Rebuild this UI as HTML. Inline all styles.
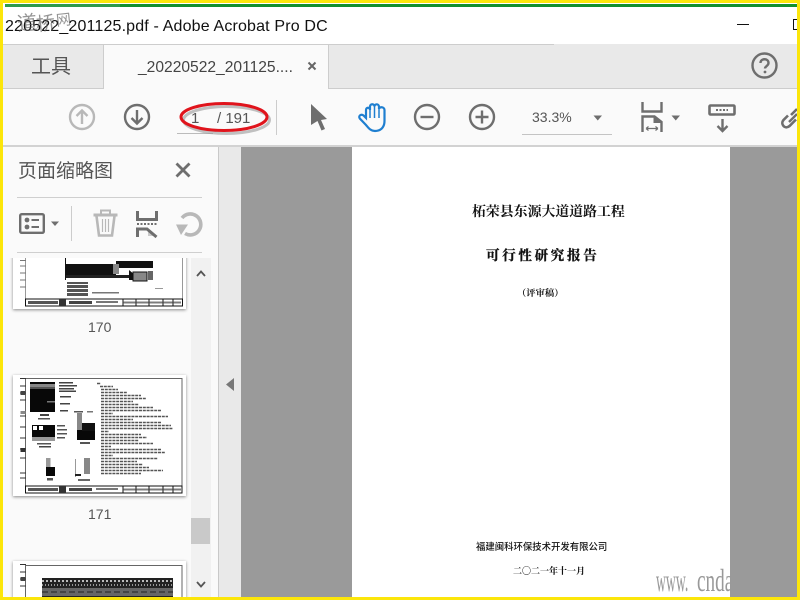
<!DOCTYPE html>
<html><head><meta charset="utf-8"><style>
html,body{margin:0;padding:0;width:800px;height:600px;overflow:hidden;background:#fff}
body{position:relative;font-family:"Liberation Sans","Noto Sans CJK SC",sans-serif}
.a{position:absolute}
.t{position:absolute;white-space:nowrap;line-height:1}
svg{position:absolute;overflow:visible}
.ic{fill:none;stroke:#6e6e6e;stroke-width:2.4}
.serif{font-family:"Liberation Serif","Noto Serif CJK SC",serif;color:#111}
</style></head><body>
<!-- title -->
<div class="a" style="left:5px;top:4px;width:795px;height:3px;background:#11902f"></div>
<div class="a" style="left:5px;top:4px;width:115px;height:3px;background:#2f9a4c"></div>
<div class="t" style="left:5px;top:19px;font-size:16px;color:#111;letter-spacing:.16px;width:330px;direction:rtl;text-align:left;overflow:hidden;height:19px"><span style="direction:ltr;unicode-bidi:bidi-override">220522_201125.pdf - Adobe Acrobat Pro DC</span></div>
<div class="a" style="left:737px;top:24px;width:12px;height:1px;background:#111"></div>
<div class="a" style="left:793px;top:19px;width:5px;height:11px;border:1px solid #111;box-sizing:border-box"></div>
<div class="t" style="left:17px;top:12px;font-size:20px;color:rgba(90,90,90,.65);transform:rotate(-6deg);font-family:'Noto Sans CJK SC',sans-serif">道</div>
<div class="t" style="left:36px;top:13px;font-size:19px;color:rgba(90,90,90,.65);transform:rotate(-6deg);font-family:'Noto Sans CJK SC',sans-serif">桥</div>
<div class="t" style="left:56px;top:12px;font-size:15px;color:rgba(90,90,90,.65);transform:rotate(-6deg);font-family:'Noto Sans CJK SC',sans-serif">网</div>
<!-- tabs -->
<div class="a" style="left:0;top:44px;width:800px;height:45px;background:#e9e9e9;border-bottom:1px solid #cdcdcd;box-sizing:border-box"></div>
<div class="a" style="left:0;top:44px;width:554px;height:1px;background:#cdcdcd"></div>
<div class="a" style="left:103px;top:44px;width:226px;height:45px;background:#fafafa;border:1px solid #cdcdcd;border-bottom:0;box-sizing:border-box"></div>
<div class="t" style="left:31px;top:57px;font-size:20px;color:#555">工具</div>
<div class="t" style="left:138px;top:60px;font-size:15.6px;color:#444">_20220522_201125....</div>
<svg style="left:308px;top:62px" width="8" height="8"><path d="M0.500 0.500L7.500 7.500M7.500 0.500L0.500 7.500" stroke="#666" stroke-width="2"/></svg>
<svg style="left:751px;top:52px" width="28" height="28"><circle cx="13.500" cy="13.500" r="12" class="ic"/><path d="M9.500 11c0-5 8-5 8 0 0 3-3.500 3-3.500 5.500" class="ic" stroke-width="2"/><circle cx="14" cy="20" r="1.400" fill="#6e6e6e"/></svg>
<!-- toolbar -->
<div class="a" style="left:0;top:89px;width:800px;height:58px;background:#fafafa;border-bottom:2px solid #d2d2d2;box-sizing:border-box"></div>
<svg style="left:68px;top:103px" width="28" height="28"><circle cx="14" cy="14" r="12" fill="none" stroke="#b8b8b8" stroke-width="2.400"/><path d="M14 21V8M8.500 13L14 7.500L19.500 13" fill="none" stroke="#b8b8b8" stroke-width="2.400"/></svg>
<svg style="left:123px;top:103px" width="28" height="28"><circle cx="14" cy="14" r="12" class="ic"/><path d="M14 7V20M8.500 15L14 20.500L19.500 15" class="ic"/></svg>
<div class="a" style="left:177px;top:133px;width:36px;height:1px;background:#bbb"></div>
<div class="t" style="left:191px;top:111px;font-size:15px;color:#555">1</div>
<div class="t" style="left:217px;top:111px;font-size:15px;color:#555">/ 191</div>
<div class="a" style="left:276px;top:100px;width:1px;height:35px;background:#ccc"></div>
<svg style="left:178px;top:98px" width="96" height="40"><ellipse cx="47" cy="20" rx="43" ry="13.500" fill="none" stroke="#999" stroke-width="3" transform="translate(1.500 2)" opacity=".6"/><ellipse cx="46" cy="19" rx="43" ry="13.500" fill="none" stroke="#e0141c" stroke-width="3"/></svg>
<svg style="left:309px;top:103px" width="20" height="28"><path d="M2 1L18 16L12 17L16 26L12.500 27.500L8.500 18L2 22Z" fill="#6e6e6e"/></svg>
<svg style="left:358px;top:103px" width="30" height="30"><path d="M8 22L1.800 15.500C0 13 3 10.500 5.500 12.500L8 15V7C8 4 12 4 12 7V3.500C12 .5 16.500 .5 16.500 3.500C16.500 .5 21 .5 21 4V6C21 3.500 26.500 3.500 26.500 7V18C26.500 24 23 28 17 28C12.500 28 10.500 25 8 22Z" fill="none" stroke="#1f7fd0" stroke-width="2.200"/><path d="M12 6V15M16.500 3.500V15M21 5V15" fill="none" stroke="#1f7fd0" stroke-width="1.500"/></svg>
<svg style="left:413px;top:103px" width="28" height="28"><circle cx="14" cy="14" r="12" class="ic"/><path d="M7.500 14H20.500" class="ic"/></svg>
<svg style="left:468px;top:103px" width="28" height="28"><circle cx="14" cy="14" r="12" class="ic"/><path d="M7.500 14H20.500M14 7.500V20.500" class="ic"/></svg>
<div class="t" style="left:532px;top:110px;font-size:14px;color:#555">33.3%</div>
<svg style="left:593px;top:115px" width="10" height="6"><path d="M0.500 0.500H9L4.750 5.500Z" fill="#6e6e6e"/></svg>
<div class="a" style="left:522px;top:133.500px;width:90px;height:1px;background:#c4c4c4"></div>
<svg style="left:640px;top:102px" width="24" height="32"><path d="M2.500 0V9.500H21.500V0" class="ic" stroke-width="2.800"/><path d="M2.500 30V14.500H14.500L21.500 20V30" class="ic" stroke-width="2.800"/><path d="M14 15V20.500H21" fill="#6e6e6e" stroke="#6e6e6e"/><path d="M6 26.500H18M6 26.500L8.500 24.500M6 26.500L8.500 28.500M18 26.500L15.500 24.500M18 26.500L15.500 28.500" stroke="#6e6e6e" stroke-width="1.200" fill="none"/></svg>
<svg style="left:671px;top:115px" width="10" height="6"><path d="M0.500 0.500H9L4.750 5.500Z" fill="#6e6e6e"/></svg>
<svg style="left:708px;top:104px" width="30" height="29"><rect x="1.500" y="1.500" width="25" height="9" rx="1" fill="none" stroke="#6e6e6e" stroke-width="2.600"/><path d="M8 6H20" stroke="#6e6e6e" stroke-width="2" stroke-dasharray="2 1.500"/><path d="M14.500 15V27M9.500 22L14.500 27L19.500 22" class="ic" stroke-width="2.800"/></svg>
<svg style="left:781px;top:106px" width="17" height="24"><path d="M16 3L10 9M7 9.500L2.500 14C-1 18 4 24 8.500 20L15 13.500" fill="none" stroke="#6e6e6e" stroke-width="2.600"/><path d="M8 16L16 8" fill="none" stroke="#6e6e6e" stroke-width="2.400"/></svg>
<!-- side panel -->
<div class="a" style="left:0;top:147px;width:219px;height:453px;background:#fafafa;border-right:1px solid #c9c9c9;box-sizing:border-box"></div>
<div class="a" style="left:219px;top:147px;width:22px;height:453px;background:#e9e9e9"></div>
<div class="t" style="left:18px;top:162px;font-size:19px;color:#555">页面缩略图</div>
<svg style="left:175px;top:162px" width="16" height="16"><path d="M1.500 1.500L14.500 14.500M14.500 1.500L1.500 14.500" stroke="#6e6e6e" stroke-width="2.800"/></svg>
<div class="a" style="left:17px;top:197px;width:185px;height:1px;background:#cfcfcf"></div>
<div class="a" style="left:17px;top:252px;width:185px;height:1px;background:#cfcfcf"></div>
<div class="a" style="left:71px;top:206px;width:1px;height:35px;background:#ccc"></div>
<svg style="left:19px;top:213px" width="27" height="22"><rect x="1.200" y="1.200" width="23.600" height="18.600" rx="1.500" fill="none" stroke="#6e6e6e" stroke-width="2.400"/><circle cx="8" cy="7" r="2.400" fill="#6e6e6e"/><circle cx="8" cy="14" r="2.400" fill="#6e6e6e"/><path d="M12.500 7H20M12.500 14H20" stroke="#6e6e6e" stroke-width="2"/></svg>
<svg style="left:51px;top:221px" width="9" height="6"><path d="M0 0.500H8L4 5Z" fill="#6e6e6e"/></svg>
<svg style="left:93px;top:209px" width="26" height="28"><path d="M0.500 6H24.500" stroke="#b8b8b8" stroke-width="3" fill="none"/><path d="M8 5V1.500H17V5" stroke="#b8b8b8" stroke-width="2" fill="none"/><path d="M3.500 7L6 26.500H19L21.500 7" fill="none" stroke="#b8b8b8" stroke-width="2.600"/><path d="M9.500 10V23M12.500 10V23M15.500 10V23" fill="none" stroke="#b8b8b8" stroke-width="1.200"/></svg>
<svg style="left:135px;top:210px" width="24" height="28"><path d="M2.500 1V9.500H21.500V1" fill="none" stroke="#6e6e6e" stroke-width="3"/><path d="M2 14H22" stroke="#6e6e6e" stroke-width="2" stroke-dasharray="2 1.500"/><path d="M2.500 27V19H12L21.500 27" fill="none" stroke="#6e6e6e" stroke-width="3"/><path d="M13 20L13 26H21Z" fill="#6e6e6e" opacity=".35"/></svg>
<svg style="left:175px;top:210px" width="28" height="28"><path d="M10 23.500A10.500 10.500 0 1 0 7 8" fill="none" stroke="#b8b8b8" stroke-width="3.600"/><path d="M1 14.500H13L6 25Z" fill="#b8b8b8"/></svg>
<!-- thumbs area -->
<div class="a" style="left:3px;top:258px;width:208px;height:342px;overflow:hidden">
 <div class="a" style="left:188px;top:0;width:20px;height:342px;background:#f1f1f1"></div>
 <div class="a" style="left:188px;top:260px;width:19px;height:26px;background:#c9c9c9"></div>
 <svg style="left:193px;top:12px" width="10" height="7"><path d="M1 6L5 1.500L9 6" fill="none" stroke="#555" stroke-width="1.800"/></svg>
 <svg style="left:193px;top:323px" width="10" height="7"><path d="M1 1L5 5.500L9 1" fill="none" stroke="#555" stroke-width="1.800"/></svg>
 <!-- 170 -->
 <div class="a" style="left:10px;top:-20px;width:173px;height:71px;background:#fff;box-shadow:0 1px 3px rgba(0,0,0,.45)"></div>
 <svg style="left:10px;top:0" width="173" height="50">
  <path d="M12.500 0V48M169.500 0V48" fill="none" stroke="#999"/>
  <path d="M7 2.500H13M7 8H13M7 15H13M7 22H13M7 29H13" stroke="#777" fill="none"/>
  <path d="M52.500 0V22" stroke="#111"/>
  <rect x="53" y="6" width="50" height="13" fill="#111"/><rect x="103" y="3" width="37" height="7" fill="#111"/><rect x="100" y="6" width="6" height="10" fill="#888"/><rect x="53" y="17" width="63" height="3" fill="#222"/><path d="M116 12L128 22H116Z" fill="#111"/><rect x="120" y="14" width="14" height="9" fill="#888"/>
  <path d="M120 14H134V23H120Z" fill="none" stroke="#111"/><rect x="135" y="13" width="5" height="9" fill="#666"/>
  <rect x="54" y="24" width="21" height="14" fill="#555"/><rect x="54" y="26" width="21" height="1" fill="#fff"/><rect x="54" y="30" width="21" height="1" fill="#fff"/><rect x="54" y="34" width="21" height="1" fill="#fff"/>
  <rect x="79" y="34" width="27" height="1.500" fill="#777"/><rect x="142" y="30" width="8" height="1" fill="#999"/>
  <rect x="12.500" y="41" width="157" height="7" fill="#fff" stroke="#111"/><rect x="15" y="43" width="30" height="3" fill="#555"/><rect x="46" y="41" width="7" height="7" fill="#333"/><rect x="56" y="43" width="23" height="3" fill="#444"/><rect x="83" y="43" width="22" height="2" fill="#777"/><path d="M110 41V48M123 41V48M136 41V48M150 41V48M160 41V48" stroke="#111"/><rect x="110" y="43.500" width="58" height="2" fill="#444" opacity=".7"/>
 </svg>
 <div class="t" style="left:85px;top:62px;font-size:14px;color:#555">170</div>
 <!-- 171 -->
 <div class="a" style="left:10px;top:117px;width:173px;height:121px;background:#fff;box-shadow:0 1px 3px rgba(0,0,0,.45)"></div>
 <svg style="left:10px;top:117px" width="173" height="121">
  <rect x="12.500" y="3.500" width="156.500" height="114.500" fill="none" stroke="#666"/>
  <path d="M7 3.500H13M7 11H13M7 18H13M7 25H13M7 41H13M7 52H13M7 63H13M7 74H13M7 83H13M7 98H13M7 103H13" stroke="#333" fill="none"/><rect x="7.500" y="16" width="5" height="4" fill="#444"/><rect x="7.500" y="36" width="5" height="3" fill="#888"/><rect x="7.500" y="73" width="5" height="4" fill="#333"/>
  <rect x="17" y="7" width="25" height="30" fill="#080808"/><rect x="17" y="9" width="25" height="3" fill="#888"/><rect x="17" y="12" width="25" height="2" fill="#555"/><rect x="34" y="26" width="8" height="1.500" fill="#777"/>
  <g fill="#444"><rect x="46" y="7" width="14" height="1.500"/><rect x="46" y="10" width="18" height="1.500"/><rect x="46" y="13" width="15" height="1.500"/><rect x="46" y="15.500" width="17" height="1.500"/><rect x="47" y="21" width="11" height="1.500"/><rect x="47" y="28" width="10" height="1.500"/><rect x="47" y="35" width="8" height="1.500"/></g>
  <rect x="27" y="39" width="9" height="2" fill="#444"/><rect x="25" y="43" width="12" height="1.500" fill="#555"/>
  <rect x="19" y="50" width="23" height="16" fill="#080808"/><rect x="19" y="62" width="23" height="4" fill="#999"/><rect x="20" y="51" width="4" height="4" fill="#fff"/><rect x="26" y="51" width="4" height="4" fill="#fff"/><g fill="#555"><rect x="44" y="50" width="8" height="1.500"/><rect x="44" y="54" width="10" height="1.500"/><rect x="44" y="58" width="10" height="1.500"/><rect x="44" y="62" width="8" height="1.500"/></g><rect x="24" y="68" width="14" height="1.500" fill="#555"/><rect x="26" y="71" width="12" height="1.500" fill="#444"/>
  <rect x="64" y="38" width="5" height="21" fill="#888"/><rect x="64" y="55" width="18" height="10" fill="#080808"/><rect x="69" y="48" width="13" height="8" fill="#111"/><rect x="61" y="36" width="9" height="1.500" fill="#555"/><rect x="74" y="36" width="6" height="1.500" fill="#777"/><rect x="67" y="67" width="10" height="2" fill="#555"/>
  <rect x="33" y="83" width="4.500" height="9" fill="#999"/><rect x="33" y="92" width="9" height="9" fill="#080808"/><rect x="34" y="103" width="6" height="2.500" fill="#555"/>
  <rect x="71" y="83" width="6" height="16" fill="#888"/><path d="M62.500 84V102" stroke="#999"/><rect x="65" y="104" width="12" height="2" fill="#666"/><rect x="62" y="99" width="6" height="2" fill="#222"/>
  <g stroke="#555" stroke-width="1.400" stroke-dasharray="3 .8" fill="none">
  <path d="M84 8.500H88M87 11.500H100M88 14.500H105M88 17.500H114M88 20.500H128M88 23.500H133M88 26.500H120M88 29.500H126M88 32.500H140M88 35.500H148M88 38.500H100M88 41.500H155M88 44.500H120M88 47.500H148M88 50.500H158M88 53.500H160M88 56.500H96M88 59.500H128M88 62.500H134M88 65.500H126M88 68.500H140M88 71.500H98M88 74.500H148M88 77.500H152M88 80.500H100M88 83.500H145M88 86.500H124M88 89.500H130M88 92.500H136M88 95.500H150M88 98.500H128"/>
  </g>
  <rect x="12.500" y="111" width="156.500" height="7" fill="#fff" stroke="#111"/><rect x="15" y="113" width="30" height="3" fill="#555"/><rect x="46" y="111" width="7" height="7" fill="#333"/><rect x="56" y="113" width="23" height="3" fill="#444"/><rect x="83" y="113" width="22" height="2" fill="#777"/><path d="M110 111V118M123 111V118M136 111V118M150 111V118M160 111V118" stroke="#111"/><rect x="110" y="113.500" width="58" height="2" fill="#444" opacity=".7"/>
 </svg>
 <div class="t" style="left:85px;top:249px;font-size:14px;color:#555">171</div>
 <!-- 172 -->
 <div class="a" style="left:10px;top:303px;width:173px;height:60px;background:#fff;box-shadow:0 1px 3px rgba(0,0,0,.45)"></div>
 <svg style="left:10px;top:303px" width="173" height="40">
  <path d="M12.500 39V4.500H169V39" fill="none" stroke="#666"/><path d="M7 3.500H13M7 11H13M7 18H13M7 25H13" stroke="#333"/><rect x="7.500" y="16" width="5" height="4" fill="#444"/>
  <rect x="29" y="17" width="131" height="20" fill="#222"/><path d="M29 20H160" stroke="#bbb" stroke-dasharray="2 2" stroke-width="2"/><path d="M29 24H160" stroke="#bbb" stroke-dasharray="1 2" stroke-width="1.500"/><rect x="29" y="27" width="131" height="8" fill="#666"/><path d="M29 31H160" stroke="#222" stroke-dasharray="6 3" stroke-width="1"/>
 </svg>
</div>
<svg style="left:226px;top:378px" width="9" height="13"><path d="M8 0V13L0 6.500Z" fill="#777"/></svg>
<!-- document -->
<div class="a" style="left:241px;top:147px;width:559px;height:453px;background:#9a9a9a"></div>
<div class="a" style="left:352px;top:147px;width:378px;height:453px;background:#fff"></div>
<div class="t serif" style="left:472px;top:204px;font-size:13.900px;font-family:'Noto Serif CJK SC',serif;font-weight:700">柘荣县东源大道道路工程</div>
<div class="t serif" style="left:486px;top:248px;font-size:13.500px;font-weight:700;letter-spacing:2.700px;font-family:'Noto Serif CJK SC',serif;-webkit-text-stroke:.35px #111">可行性研究报告</div>
<div class="t serif" style="left:517px;top:288px;font-size:9.300px;font-weight:700;font-family:'Noto Serif CJK SC',serif">（评审稿）</div>
<div class="t serif" style="left:476px;top:542px;font-size:9.400px;font-weight:500;font-family:'Noto Sans CJK SC',sans-serif">福建闽科环保技术开发有限公司</div>
<div class="t serif" style="left:513px;top:566px;font-size:9px;font-family:'Noto Serif CJK SC',serif;font-weight:700">二〇二一年十一月</div>
<div class="a" style="left:650px;top:560px;width:81px;height:37px;overflow:hidden">
 <div class="t" style="left:6px;top:4px;font-size:32px;color:#999;font-family:'Liberation Serif',serif;transform:scaleX(.43);transform-origin:0 0">www.</div>
 <div class="t" style="left:47px;top:4px;font-size:32px;color:#999;font-family:'Liberation Serif',serif;transform:scaleX(.6);transform-origin:0 0">cnda</div>
</div>
<!-- yellow frame -->
<div class="a" style="left:0;top:0;width:800px;height:600px;box-sizing:border-box;border:solid #fce60a;border-width:3px 3px 3px 3px"></div>
</body></html>
